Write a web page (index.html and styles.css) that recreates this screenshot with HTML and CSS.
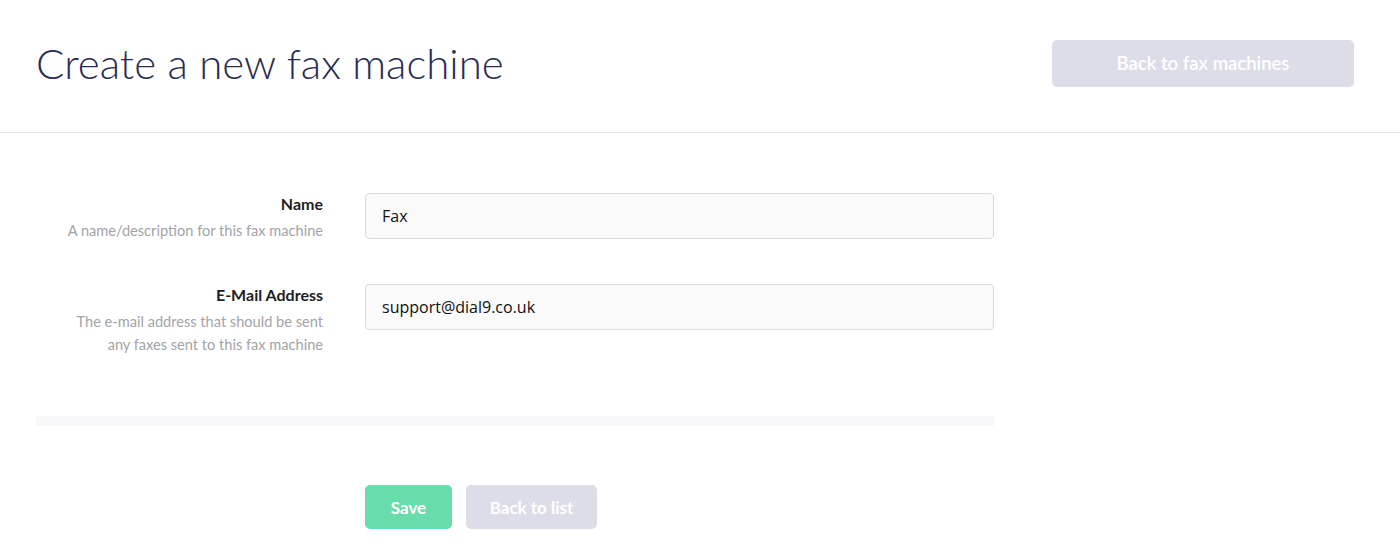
FILE: index.html
```html
<!DOCTYPE html>
<html lang="en">
<head>
<meta charset="utf-8">
<title>Create a new fax machine</title>
<link rel="stylesheet" href="styles.css">
</head>
<body>
<header class="page-header">
  <h1 class="page-title">Create a new fax machine</h1>
  <a class="btn btn-muted btn-lg" href="#">Back to fax machines</a>
</header>
<main class="content">
  <form class="form">
    <div class="field">
      <div class="field-label">
        <label class="label" for="name">Name</label>
        <p class="hint">A name/description for this fax machine</p>
      </div>
      <input class="input" id="name" type="text" value="Fax">
    </div>
    <div class="field">
      <div class="field-label">
        <label class="label" for="email">E-Mail Address</label>
        <p class="hint">The e-mail address that should be sent<br>any faxes sent to this fax machine</p>
      </div>
      <input class="input" id="email" type="text" value="support@dial9.co.uk">
    </div>
    <div class="divider"></div>
    <div class="actions">
      <button class="btn btn-primary" type="button">Save</button>
      <a class="btn btn-muted" href="#">Back to list</a>
    </div>
  </form>
</main>
</body>
</html>
```
FILE: styles.css
```css
* { box-sizing: border-box; }
html, body { margin: 0; padding: 0; background: #fff; }
body { font-family: Lato, "Open Sans", sans-serif; color: #222; }

.page-header {
  display: flex;
  align-items: center;
  justify-content: space-between;
  height: 133px;
  padding: 0 46px 6px 36px;
  border-bottom: 1px solid #e1e1e7;
}
.page-title {
  margin: 0;
  font-size: 42px;
  font-weight: 300;
  color: #272c52;
}

.btn {
  display: inline-flex;
  align-items: center;
  justify-content: center;
  border: 0;
  border-radius: 5px;
  color: #fff;
  font-family: Lato, sans-serif;
  font-weight: 700;
  font-size: 17px;
  text-decoration: none;
  height: 44px;
  padding: 0 26px;
  cursor: pointer;
}
.btn-lg { height: 47px; width: 302px; font-size: 18.5px; font-weight: 600; }
.btn-muted { background: #dcdde8; }
.btn-primary { background: #67ddab; }

.content { padding: 60px 36px 0; width: 1030px; }
.form { display: flex; flex-direction: column; }
.field {
  display: grid;
  grid-template-columns: 287px 1fr;
  column-gap: 42px;
  margin-bottom: 42px;
}
.field-label { text-align: right; padding-top: 1px; }
.label { display: block; font-weight: 700; font-size: 16px; color: #1d1d22; line-height: 20px; }
.hint { margin: 5px 0 0; font-size: 14.6px; color: #a3a3a7; line-height: 23px; }
.input {
  height: 46px;
  border: 1px solid #dadada;
  border-radius: 4px;
  background: #fafafa;
  padding: 0 16px;
  font-family: "Open Sans", sans-serif;
  font-size: 16px;
  color: #111;
}
.divider { height: 10px; background: #f8f8fb; margin-top: 18px; }
.actions { display: flex; gap: 14px; padding-left: 329px; margin-top: 59px; }
.actions .btn-primary { width: 87px; padding: 0; }
.actions .btn-muted { width: 131px; padding: 0; }
```
